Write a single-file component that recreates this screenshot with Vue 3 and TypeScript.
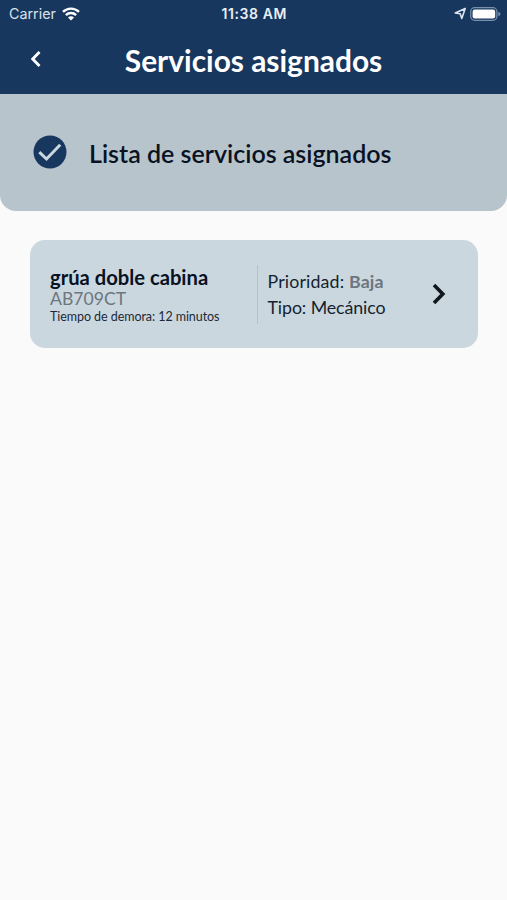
<script setup lang="ts">
interface Service {
  id: number
  name: string
  plate: string
  delay: number
  priority: string
  type: string
}

const services: Service[] = [
  { id: 1, name: 'grúa doble cabina', plate: 'AB709CT', delay: 12, priority: 'Baja', type: 'Mecánico' },
]
</script>

<template>
  <div class="screen">
    <header class="top">
      <div class="status">
        <div class="carrier">
          <span>Carrier</span>
          <svg class="wifi" viewBox="0 0 18 14" aria-hidden="true">
            <path d="M1 4.9a11.4 11.4 0 0 1 16 0" />
            <path d="M3.9 8.1a7.2 7.2 0 0 1 10.2 0" />
            <path class="dot" d="M9 13.6 6 10.6a4.2 4.2 0 0 1 6 0Z" />
          </svg>
        </div>
        <span class="time">11:38 AM</span>
        <div class="indicators">
          <svg class="location" viewBox="0 0 13 13" aria-hidden="true">
            <path d="M11.2 1.4 1.2 6 6.2 6.7 7.8 11.4Z" />
          </svg>
          <svg class="battery" viewBox="0 0 31 14" aria-hidden="true">
            <rect class="shell" x=".7" y=".7" width="26.2" height="12.6" rx="4" />
            <rect class="charge" x="2.6" y="2.5" width="22.6" height="9" rx="2.2" />
            <path class="cap" d="M28.3 4.7q2.2 .8 2.2 2.3t-2.2 2.3Z" />
          </svg>
        </div>
      </div>
      <nav class="bar">
        <button class="back" aria-label="Volver">
          <svg viewBox="0 0 12 18" aria-hidden="true"><path d="M9.5 2 2.7 9l6.8 7" /></svg>
        </button>
        <h1>Servicios asignados</h1>
      </nav>
    </header>

    <section class="banner">
      <svg class="check" viewBox="0 0 34 34" aria-hidden="true">
        <circle cx="17" cy="17" r="16.5" />
        <path d="M6.3 17.2 13.5 24 27.2 9.8" />
      </svg>
      <h2>Lista de servicios asignados</h2>
    </section>

    <main class="list">
      <article v-for="service in services" :key="service.id" class="card">
        <div class="vehicle">
          <h3>{{ service.name }}</h3>
          <p class="plate">{{ service.plate }}</p>
          <p class="delay">Tiempo de demora: {{ service.delay }} minutos</p>
        </div>
        <div class="details">
          <p class="priority">Prioridad: <b>{{ service.priority }}</b></p>
          <p class="type">Tipo: {{ service.type }}</p>
        </div>
        <svg class="next" viewBox="0 0 14 22" aria-hidden="true"><path d="m2 2 8.8 9L2 20" /></svg>
      </article>
    </main>
  </div>
</template>

<style>
body {
  background: #fafafa;
}
</style>

<style scoped>
.screen {
  min-height: 900px;
  background: #fafafa;
  color: #081223;
  font-family: Lato, sans-serif;
}
h1, h2, h3, p {
  margin: 0;
  white-space: nowrap;
}
.top {
  height: 94px;
  background: #18375f;
  color: #fff;
}
.status {
  display: grid;
  grid-template-columns: 1fr auto 1fr;
  align-items: center;
  height: 27px;
  padding: 0 6px 0 9px;
  font: 14.3px/27px Inter, sans-serif;
}
.carrier {
  display: flex;
  align-items: center;
  gap: 6px;
  color: #d9e1eb;
}
.wifi {
  width: 18px;
  height: 14px;
  fill: none;
  stroke: #fff;
  stroke-width: 2.4;
}
.wifi .dot {
  fill: #fff;
  stroke: none;
}
.time {
  padding-right: 1.5px;
  color: #e9eef5;
  font-size: 14px;
  font-weight: 600;
  letter-spacing: 0.6px;
}
.indicators {
  display: flex;
  align-items: center;
  justify-content: flex-end;
  gap: 3px;
}
.location {
  width: 13px;
  height: 13px;
  fill: none;
  stroke: #dce5ef;
  stroke-width: 1.6;
  stroke-linejoin: round;
}
.battery {
  width: 31px;
  height: 14px;
}
.shell {
  fill: none;
  stroke: #7890aa;
  stroke-width: 1.3;
}
.charge {
  fill: #fff;
}
.cap {
  fill: #7890aa;
}
.bar {
  display: grid;
  grid-template-columns: 72px 1fr 72px;
  align-items: center;
  height: 65px;
}
.back {
  display: flex;
  justify-content: center;
  padding: 0 0 2px;
  border: 0;
  background: none;
}
.back svg {
  width: 12px;
  height: 18px;
  fill: none;
  stroke: #fff;
  stroke-width: 2.8;
}
h1 {
  font-size: 29.9px;
  font-weight: 700;
  line-height: 36px;
  text-align: center;
}
.banner {
  display: flex;
  align-items: center;
  gap: 22px;
  box-sizing: border-box;
  height: 117px;
  padding: 0 33px 2px;
  border-radius: 0 0 16px 16px;
  background: #b7c4cc;
}
.check {
  width: 34px;
  height: 34px;
}
.check circle {
  fill: #18375f;
}
.check path {
  fill: none;
  stroke: #cbd7df;
  stroke-width: 3;
}
h2 {
  padding-top: 2px;
  font-size: 25px;
  font-weight: 600;
  line-height: 32px;
}
.list {
  padding: 29px 29px 0 30px;
}
.card {
  display: flex;
  align-items: center;
  box-sizing: border-box;
  height: 108px;
  padding: 0 32px 0 20px;
  border-radius: 15px;
  background: #cbd7df;
}
.vehicle {
  width: 207px;
}
h3 {
  font-size: 20.2px;
  font-weight: 700;
  line-height: 24px;
}
.plate {
  color: #6b767e;
  font-size: 17.6px;
  line-height: 20px;
}
.delay {
  color: #1d2938;
  font-size: 12.5px;
  letter-spacing: -0.06px;
  line-height: 15px;
}
.details {
  display: flex;
  flex-direction: column;
  justify-content: center;
  box-sizing: border-box;
  height: 59px;
  padding-left: 9.5px;
  border-left: 1px solid #b5c2ca;
  color: #141f30;
  font-size: 17.8px;
  line-height: 26px;
}
.priority {
  letter-spacing: 0.15px;
}
.type {
  letter-spacing: -0.1px;
}
.details b {
  color: #6b767e;
}
.next {
  width: 14px;
  height: 22px;
  margin-left: auto;
  fill: none;
  stroke: #10171d;
  stroke-width: 3.6;
}
</style>
